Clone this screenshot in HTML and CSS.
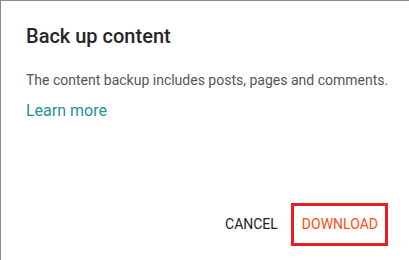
FILE: index.html
```html
<!DOCTYPE html>
<html lang="en">
<head>
  <meta charset="UTF-8" />
  <title>Back up content</title>
  <link rel="stylesheet" href="styles.css">
</head>
<body>
  <div class="dialog">
    <h2 class="title">Back up content</h2>
    <p class="text">The content backup includes posts, pages and comments.</p>
    <a class="learn" href="#">Learn more</a>

    <div class="actions">
      <button class="btn cancel">Cancel</button>
      <button class="btn download">Download</button>
    </div>
  </div>
</body>
</html>
```

FILE: styles.css
```css
* {
  box-sizing: border-box;
}

body {
  margin: 0;
  font-family: Roboto, 'Liberation Sans', sans-serif;
  background: #fff;
}

.dialog {
  height: 260px;
  border-top: 1px solid #8a8a8a;
  border-left: 1px solid #8a8a8a;
  padding: 21px 10px 0 25px;
  display: flex;
  flex-direction: column;
  align-items: flex-start;
}

.title {
  margin: 0;
  font-size: 20px;
  font-weight: 500;
  line-height: 28px;
  color: #262626;
}

.text {
  margin: 20px 0 0;
  font-size: 14px;
  line-height: 20px;
  color: #555;
  white-space: nowrap;
}

.learn {
  margin-top: 11px;
  font-size: 16px;
  line-height: 20px;
  color: #26909b;
  text-decoration: none;
}

.actions {
  margin-top: auto;
  align-self: stretch;
  display: flex;
  justify-content: flex-end;
  align-items: center;
  gap: 2px;
  padding: 0 11px 14px 0;
}

.btn {
  background: none;
  border: 3px solid transparent;
  font-family: inherit;
  font-size: 14px;
  font-weight: 400;
  text-transform: uppercase;
  padding: 9px 8px 10px;
  line-height: 18px;
  cursor: pointer;
}

.cancel {
  color: #222;
}

.download {
  padding-right: 7px;
  color: #ff4e12;
  border-color: #ec1c24;
}
```
